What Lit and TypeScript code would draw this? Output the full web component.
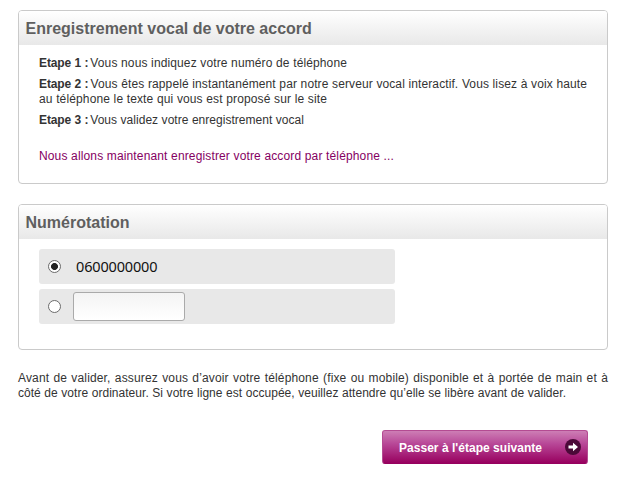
import { LitElement, html, css } from "lit";
import { customElement, property } from "lit/decorators.js";

@customElement("info-panel")
class InfoPanel extends LitElement {
  @property() heading = "";
  static styles = css`
    :host { display: block; box-sizing: border-box; border: 1px solid #cacaca; border-radius: 4px; background: #fff; overflow: hidden; }
    .head { margin: 0; height: 34px; box-sizing: border-box; padding: 0 6px 0 6.5px; font: bold 16px/35px "Liberation Sans", Arial, sans-serif; color: #5f5f5f; background: linear-gradient(#ffffff, #e8e8e8); }
  `;
  render() {
    return html`<h2 class="head">${this.heading}</h2><slot></slot>`;
  }
}

@customElement("app-root")
class AppRoot extends LitElement {
  static styles = css`
    :host { display: block; box-sizing: border-box; width: 623px; height: 480px; padding: 10px 15px 0 18px; background: #fff; color: #333; font: 12px/15px "Liberation Sans", Arial, sans-serif; overflow: hidden; }
    .steps { height: 174px; }
    .phones { height: 146px; margin-top: 20px; }
    .body { padding: 11px 20px 0; }
    p { margin: 0 0 6px; }
    .line { display: block; text-align-last: justify; }
    .s1 { width: 308px; letter-spacing: 0.12px; }
    .s2a { width: 548px; letter-spacing: 0.1px; }
    .s2b { width: 288px; letter-spacing: 0.13px; }
    .s3 { width: 265px; letter-spacing: 0.03px; }
    b { margin-right: -1.5px; letter-spacing: -0.1px; }
    .accent { margin-top: 21px; color: #850062; }
    .accent .line { width: 355px; letter-spacing: 0.14px; }
    .choices { display: flex; flex-direction: column; gap: 5px; padding: 10px 20px 0; }
    .choice { display: flex; align-items: center; box-sizing: border-box; width: 356px; height: 35px; padding-left: 9px; border-radius: 3px; background: #e8e8e8; }
    .radio { appearance: none; box-sizing: border-box; flex: none; width: 13px; height: 13px; margin: 0; border: 1px solid #6b6b6b; border-radius: 50%; background: #fff; }
    .radio:checked { background: radial-gradient(circle, #222 0 3.1px, #fff 3.8px); }
    .number { margin: 0 0 2px 15px; color: #111; font: 14.5px/20px "Noto Sans", "Open Sans", sans-serif; letter-spacing: -0.16px; }
    .field { box-sizing: border-box; width: 112px; height: 29px; margin: 0 0 0 12px; padding: 0 6px; border: 1px solid #aaa; border-radius: 3px; background: linear-gradient(#f4f4f4, #fff); font: 14px "Noto Sans", sans-serif; }
    .note { width: 590px; margin: 21px 0 0; letter-spacing: 0.15px; }
    .note .last { width: 548px; letter-spacing: 0.03px; }
    .next { display: flex; align-items: center; justify-content: space-between; box-sizing: border-box; width: 206px; height: 34px; margin: 29px 0 0 364px; padding: 0 6px 0 16px; border: 1px solid #b44b92; border-bottom-color: #96015f; border-radius: 3px; background: linear-gradient(#cd7eb5, #b84797 40%, #98015f); color: #fff; font: bold 12px/15px "Liberation Sans", Arial, sans-serif; letter-spacing: 0.03px; }
    .label { padding-top: 2px; }
    .arrow { width: 16px; height: 16px; }
  `;
  render() {
    return html`
      <info-panel class="steps" heading="Enregistrement vocal de votre accord">
        <div class="body">
          <p><span class="line s1"><b>Etape 1 :</b> Vous nous indiquez votre numéro de téléphone</span></p>
          <p>
            <span class="line s2a"><b>Etape 2 :</b> Vous êtes rappelé instantanément par notre serveur vocal interactif. Vous lisez à voix haute</span>
            <span class="line s2b">au téléphone le texte qui vous est proposé sur le site</span>
          </p>
          <p><span class="line s3"><b>Etape 3 :</b> Vous validez votre enregistrement vocal</span></p>
          <p class="accent"><span class="line">Nous allons maintenant enregistrer votre accord par téléphone ...</span></p>
        </div>
      </info-panel>
      <info-panel class="phones" heading="Numérotation">
        <div class="choices">
          <label class="choice"><input class="radio" type="radio" name="phone" checked /><span class="number">0600000000</span></label>
          <div class="choice"><input class="radio" type="radio" name="phone" /><input class="field" type="text" /></div>
        </div>
      </info-panel>
      <p class="note">
        <span class="line">Avant de valider, assurez vous d’avoir votre téléphone (fixe ou mobile) disponible et à portée de main et à</span>
        <span class="line last">côté de votre ordinateur. Si votre ligne est occupée, veuillez attendre qu’elle se libère avant de valider.</span>
      </p>
      <button class="next">
        <span class="label">Passer à l'étape suivante</span>
        <svg class="arrow" viewBox="0 0 16 16"><circle cx="8" cy="8" r="8" fill="#4b0938" /><path d="M3.5 6.4H8V3.7L13 8L8 12.3V9.6H3.5Z" fill="#fff" /></svg>
      </button>
    `;
  }
}
